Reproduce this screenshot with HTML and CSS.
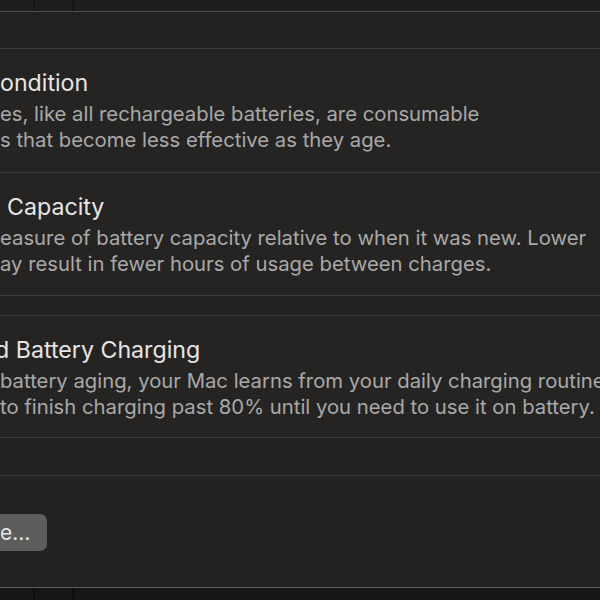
FILE: index.html
```html
<!DOCTYPE html>
<html>
<head>
<meta charset="utf-8">
<link rel="stylesheet" href="styles.css">
</head>
<body>
<div class="screen">
  <div class="topstrip"><span class="tick t1"></span><span class="tick t2"></span></div>
  <div class="band band-top"></div>
  <section class="sec sec1">
    <div class="col">
      <div class="title">ondition</div>
      <div class="desc">es, like all rechargeable batteries, are consumable</div>
      <div class="desc">s that become less effective as they age.</div>
    </div>
  </section>
  <section class="sec sec2">
    <div class="col">
      <div class="title indent">Capacity</div>
      <div class="desc">easure of battery capacity relative to when it was new. Lower</div>
      <div class="desc">ay result in fewer hours of usage between charges.</div>
    </div>
  </section>
  <div class="band band-mid"></div>
  <section class="sec sec3">
    <div class="col">
      <div class="title pull">d Battery Charging</div>
      <div class="desc">battery aging, your Mac learns from your daily charging routine</div>
      <div class="desc">to finish charging past 80% until you need to use it on battery.</div>
    </div>
  </section>
  <div class="band band-low"></div>
  <div class="footer">
    <button class="btn">e…</button>
  </div>
  <div class="bottomstrip"><span class="tick t1"></span><span class="tick t2"></span></div>
</div>
</body>
</html>
```
FILE: styles.css
```css
html, body {
  margin: 0;
  padding: 0;
  background: #1c1c1c;
}
.screen {
  width: 600px;
  height: 600px;
  overflow: hidden;
  display: flex;
  flex-direction: column;
  font-family: Inter, "Noto Sans", sans-serif;
}
.topstrip {
  height: 11px;
  flex: none;
  background: #1e1e1e;
  display: flex;
}
.tick {
  width: 2px;
  background: #161616;
}
.t1 { margin-left: 33px; }
.t2 { margin-left: 37px; }
.band {
  flex: none;
  background: #212121;
}
.band-top {
  height: 36px;
  border-top: 1px solid #4f4f4f;
  border-bottom: 1px solid #3b3b3b;
}
.sec {
  flex: none;
  background: #252423;
  border-bottom: 1px solid #3e3e3e;
  overflow: hidden;
}
.sec1 { height: 123px; }
.sec2 { height: 122px; }
.sec3 { height: 121px; }
.band-mid {
  height: 19px;
  border-bottom: 1px solid #3e3e3e;
}
.band-low {
  height: 37px;
  border-bottom: 1px solid #3e3e3e;
}
.col {
  padding-top: 20px;
  white-space: nowrap;
}
.title {
  font-size: 23.2px;
  line-height: 28px;
  color: #e6e6e6;
  margin-bottom: 4px;
}
.title.indent { padding-left: 7px; }
.title.pull { margin-left: -5px; }
.desc {
  font-size: 20.3px;
  line-height: 26px;
  color: #a9a9a9;
}
.footer {
  flex: none;
  height: 111px;
  background: #222222;
  border-bottom: 1px solid #5e5e5e;
}
.btn {
  margin-top: 38px;
  margin-left: -12px;
  height: 37px;
  padding: 0 17px 0 12px;
  border: none;
  border-radius: 7px;
  background: #5d5d5d;
  color: #e4e4e4;
  font-family: Inter, "Noto Sans", sans-serif;
  font-size: 21px;
}
.bottomstrip {
  flex: 1;
  background: #161616;
  display: flex;
}
.bottomstrip .tick { background: #0f0f0f; }
```
